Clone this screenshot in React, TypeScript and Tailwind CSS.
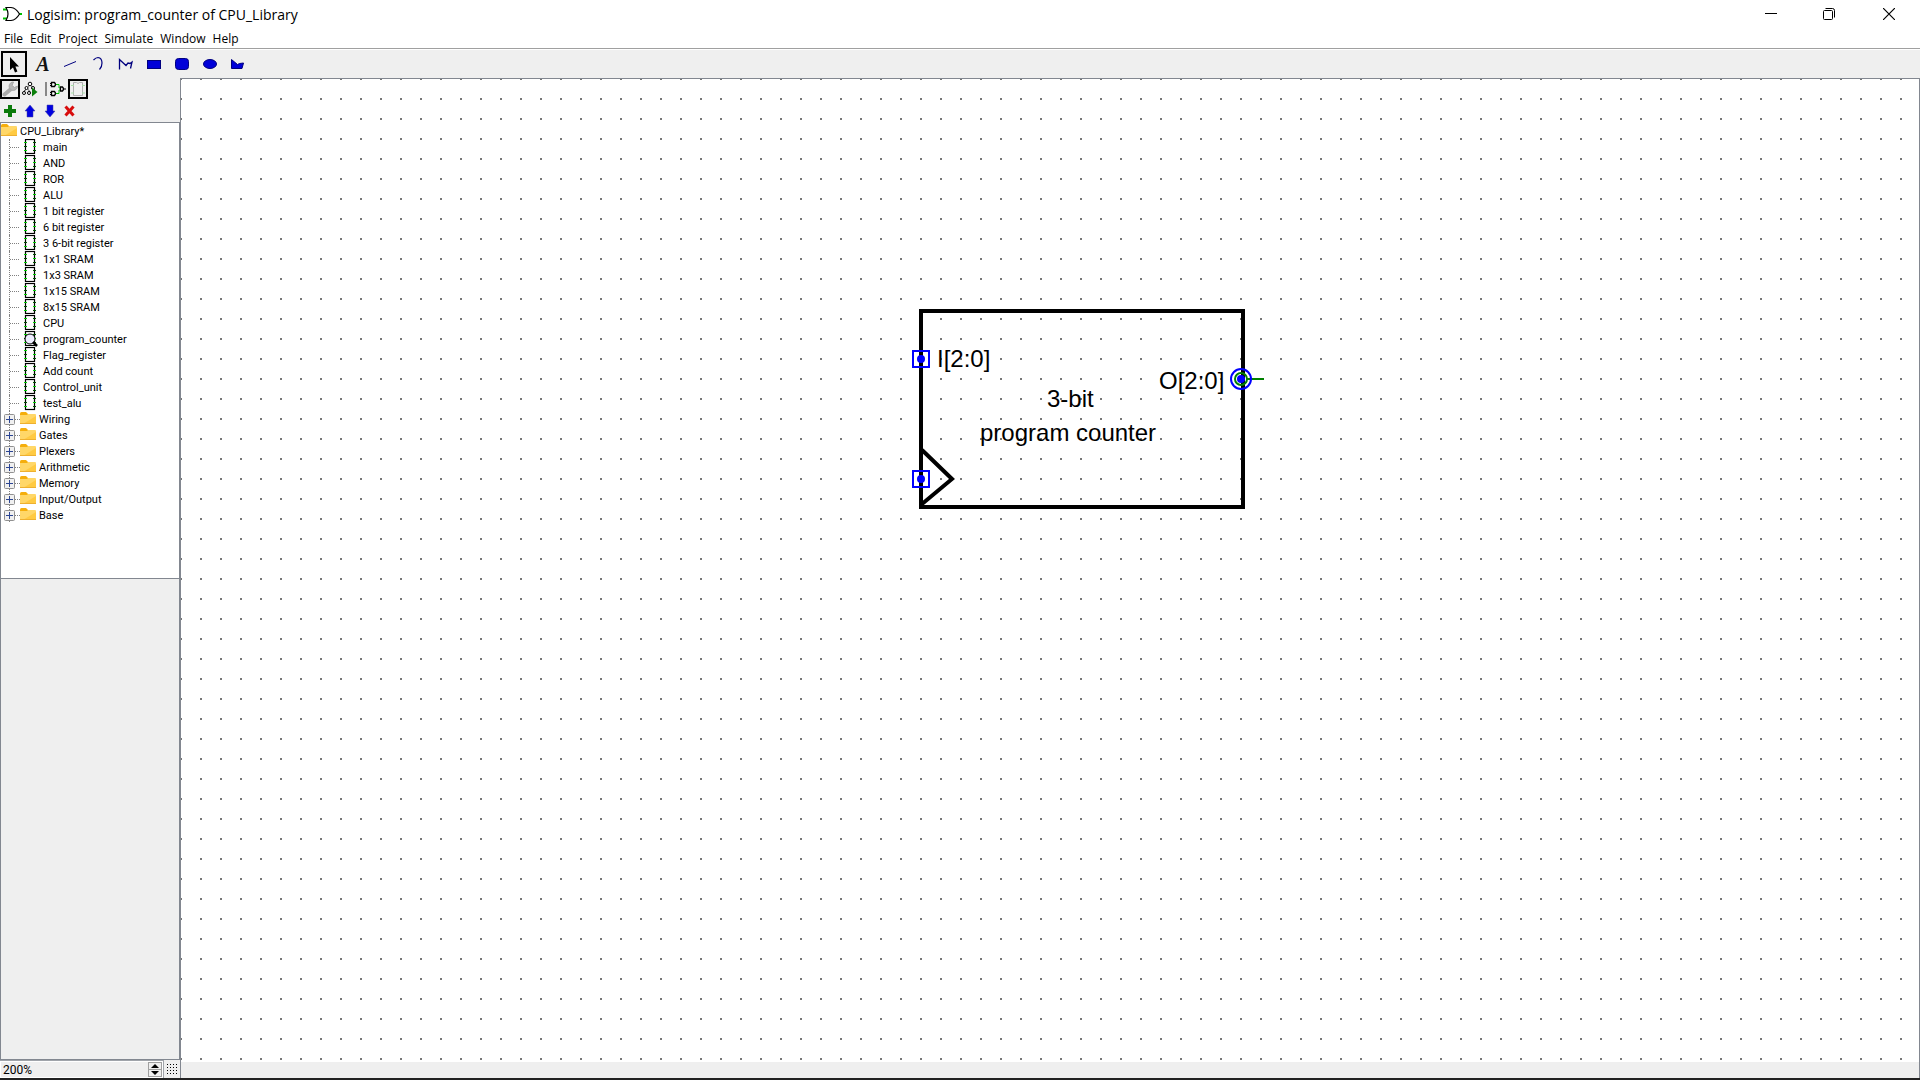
import type { ReactNode } from "react";

const menus = ["File", "Edit", "Project", "Simulate", "Window", "Help"];

const circuits = [
  "main", "AND", "ROR", "ALU", "1 bit register", "6 bit register", "3 6-bit register",
  "1x1 SRAM", "1x3 SRAM", "1x15 SRAM", "8x15 SRAM", "CPU", "program_counter",
  "Flag_register", "Add count", "Control_unit", "test_alu",
];

const libraries = ["Wiring", "Gates", "Plexers", "Arithmetic", "Memory", "Input/Output", "Base"];

const navy = "#00007f";
const blue = "#0000d8";

const drawTools: { name: string; icon: ReactNode }[] = [
  {
    name: "Select",
    icon: <path d="M7 4v13l3-2.500 2 5 2.400-1-2-5H16z" fill="#000" />,
  },
  {
    name: "Text",
    icon: (
      <text x="12" y="18" textAnchor="middle" fontFamily="Liberation Serif, serif" fontSize="20" fontWeight="700" fontStyle="italic" fill="#111">
        A
      </text>
    ),
  },
  { name: "Line", icon: <path d="M5 13.500 17 8.500" stroke={navy} fill="none" /> },
  { name: "Curve", icon: <path d="M6.500 7Q9 4.500 11 4.500q4 .5 4 5.500 0 4-2.500 6.500" stroke={navy} strokeWidth="1.200" fill="none" /> },
  { name: "Polyline", icon: <path d="M4.500 16.500v-10l6.500 6 2-2.500 2 .5 2-1.500-1.500 6.500" stroke={navy} strokeWidth="1.300" fill="none" /> },
  { name: "Rectangle", icon: <rect x="4.500" y="7.500" width="13" height="8" fill={blue} stroke={navy} /> },
  { name: "Rounded Rectangle", icon: <rect x="4.500" y="5.500" width="13" height="11" rx="3" fill={blue} stroke={navy} /> },
  { name: "Oval", icon: <ellipse cx="11" cy="11" rx="6.500" ry="4.500" fill={blue} stroke={navy} /> },
  { name: "Polygon", icon: <path d="M4.500 6.500 10.500 11.500l2-1 4-.5-1.500 5.500H4.500z" fill={blue} stroke={navy} /> },
];

function Svg({ size, children }: { size: 16 | 22; children: ReactNode }) {
  return (
    <svg className="block shrink-0" width={size} height={size} viewBox={`0 0 ${size} ${size}`} aria-hidden="true">
      {children}
    </svg>
  );
}

function LogoIcon() {
  return (
    <svg width="20" height="18" viewBox="0 0 20 18" fill="none" aria-hidden="true">
      <path d="M0 4.500h4M0 13.500h4M16 9h3" stroke="#00c000" strokeWidth="2" />
      <path d="M3 2.500h5q5 .5 8.500 6.500-3.500 6-8.500 6.500H3q4-6.500 0-13z" stroke="#000" strokeWidth="1.200" fill="#fff" />
    </svg>
  );
}

function ChipIcon({ current }: { current?: boolean }) {
  return (
    <Svg size={16}>
      <rect x="3.500" y="0.500" width="9" height="14" fill="#fff" stroke="#000" strokeWidth="1.200" />
      <path d="M2 3.500h3M2 11.500h3M11 7.500h3" stroke="#00d000" />
      <path d="M2 7.500h3M11 3.500h3M11 11.500h3" stroke="#005000" />
      {current && (
        <>
          <circle cx="8" cy="8" r="5" fill="#eeeeff" stroke="#000" />
          <path d="M11 11l4 4" stroke="#000" strokeWidth="2.500" />
        </>
      )}
    </Svg>
  );
}

function FolderIcon() {
  return (
    <Svg size={16}>
      <path d="M0 2.500Q0 1 1.500 1H6l2 2v3H0z" fill="#f5ae0c" />
      <path d="M0 4h7l1-1h7q1 0 1 1v9H0z" fill="#ffd768" />
      <path d="M16 5v8H3z" fill="#ffca42" />
      <path d="M0 12.500h16" stroke="#eeb030" />
    </Svg>
  );
}

function WrenchIcon() {
  return (
    <Svg size={16}>
      <path d="M2.500 13.500 9 8" stroke="#ababab" strokeWidth="4" strokeLinecap="round" />
      <path d="M11.500 1a4.200 4.200 0 1 0 4 4l-3 1.500-2.500-2z" fill="#b8b8b8" stroke="#a6a6a6" />
    </Svg>
  );
}

function SimulationIcon() {
  return (
    <Svg size={16}>
      <path d="M8 4 3 9M8 4l5 5M5 7l4 5M3 9l-1 4" stroke="#000" fill="none" strokeDasharray="2 1" />
      <g fill="#fff" stroke="#000">
        <circle cx="8" cy="3" r="1.800" />
        <circle cx="4.500" cy="7" r="1.500" />
        <circle cx="11" cy="7" r="1.500" />
        <circle cx="2" cy="12" r="1.500" />
        <circle cx="7" cy="12" r="1.500" />
      </g>
      <path d="M10 6.500v9l5.500-4.500z" fill="#0a800a" />
    </Svg>
  );
}

function LayoutIcon() {
  return (
    <Svg size={16}>
      <path d="M6 3.500h3v3.500h3M6 12.500h3V9h3" stroke="#00c000" fill="none" />
      <g fill="#fff" stroke="#000" strokeWidth="1.300">
        <path d="M1.500 1.500h3q2 2 0 4h-3zM1.500 10.500h3q2 2 0 4h-3z" />
        <path d="M10.500 6h2q2 2 0 4h-2z" />
      </g>
      <path d="M0 2.500h1M0 4.500h1M0 11.500h1M0 13.500h1M14 8h2" stroke="#000" />
    </Svg>
  );
}

function AppearanceIcon() {
  return (
    <Svg size={16}>
      <path d="M3.500 1.500h3q1.500 2 3 0h3v13h-9z" fill="#f0f0f0" stroke="#b0b0b0" />
      <path d="M1 4.500h3M1 12h3M12 4.500h3M12 12h3" stroke="#a8e0a8" />
    </Svg>
  );
}

function IconButton({ label, active, children }: { label: string; active?: boolean; children: ReactNode }) {
  return (
    <button
      type="button"
      aria-label={label}
      className={active ? "flex h-5 w-5 items-center justify-center border-2 border-black" : "flex h-5 w-5 items-center justify-center"}
    >
      {children}
    </button>
  );
}

function Explorer() {
  return (
    <nav aria-label="Project explorer" className="h-[457px] shrink-0 overflow-hidden border border-[#828790] bg-white font-['Roboto',sans-serif] text-[11px] leading-4">
      <button type="button" className="flex h-4 items-center gap-[3px] whitespace-nowrap">
        <FolderIcon />
        <span className="pt-px">CPU_Library*</span>
      </button>
      <ul>
        {circuits.map((name) => (
          <li key={name} className="ml-2 border-l border-dotted border-[#808080]">
            <button type="button" className="flex h-4 items-center whitespace-nowrap">
              <span className="mr-[3px] w-[9px] border-t border-dotted border-[#808080]" />
              <ChipIcon current={name === "program_counter"} />
              <span className="ml-[5px] pt-px">{name}</span>
            </button>
          </li>
        ))}
        {libraries.map((name) => (
          <li key={name}>
            <button type="button" aria-expanded="false" className="flex h-4 items-center whitespace-nowrap pl-[3px]">
              <svg width="16" height="16" viewBox="0 0 16 16" aria-hidden="true">
                <path d="M5.500 0v16M11 8.500h5" stroke="#808080" strokeDasharray="1 1" />
                <rect x="0.500" y="3.500" width="10" height="10" rx="1" fill="#f0f0f0" stroke="#919191" />
                <path d="M2 8.500h7M5.500 5v7" stroke="#2b4593" />
              </svg>
              <FolderIcon />
              <span className="ml-[3px] pt-px">{name}</span>
            </button>
          </li>
        ))}
      </ul>
    </nav>
  );
}

function Port({ x, y }: { x: number; y: number }) {
  return (
    <g>
      <rect x={x - 8} y={y - 8} width="16" height="16" fill="none" stroke="#0000ff" strokeWidth="2" />
      <circle cx={x} cy={y} r="4" fill="#0000ff" />
    </g>
  );
}

function AppearanceCanvas() {
  return (
    <svg className="block h-full w-full" role="img" aria-label="program_counter appearance">
      <defs>
        <pattern id="grid" x="-1" y="-1" width="20" height="20" patternUnits="userSpaceOnUse">
          <rect width="2" height="2" fill="#777777" />
        </pattern>
      </defs>
      <rect width="100%" height="100%" fill="url(#grid)" />
      <rect x="740" y="232" width="322" height="196" fill="none" stroke="#000" strokeWidth="4" />
      <path d="M741 371l30 29-30 25" fill="none" stroke="#000" strokeWidth="4" />
      <g fontFamily="Liberation Sans, Arial, sans-serif" fontSize="24" fill="#000">
        <text x="756" y="288">I[2:0]</text>
        <text x="866" y="328">3-bit</text>
        <text x="799" y="362">program counter</text>
        <text x="978" y="310">O[2:0]</text>
      </g>
      <Port x={740} y={280} />
      <Port x={740} y={400} />
      <path d="M1066 300h17" stroke="#008000" strokeWidth="2" />
      <circle cx="1060" cy="300" r="10" fill="none" stroke="#0000ff" strokeWidth="2" />
      <circle cx="1060" cy="300" r="6" fill="none" stroke="#008000" strokeWidth="2" />
      <circle cx="1060" cy="300" r="4" fill="#0000ff" />
    </svg>
  );
}

export default function App() {
  return (
    <div className="flex h-screen flex-col overflow-hidden border-b-2 border-[#222222] bg-[#efefef] font-['Noto_Sans',sans-serif] text-black">
      <header className="flex h-7 shrink-0 items-center justify-between bg-white">
        <div className="flex items-center gap-1 pl-[3px]">
          <LogoIcon />
          <h1 className="pt-0.5 font-['Open_Sans',sans-serif] text-[14px] leading-[26px]">Logisim: program_counter of CPU_Library</h1>
        </div>
        <div className="flex">
          <button type="button" aria-label="Minimize" className="flex h-7 w-[58px] items-center justify-center">
            <svg width="12" height="12" viewBox="0 0 12 12"><path d="M0 5.500h12" stroke="#000" /></svg>
          </button>
          <button type="button" aria-label="Restore" className="flex h-7 w-[58px] items-center justify-center">
            <svg width="12" height="12" viewBox="0 0 12 12" fill="none" stroke="#000">
              <rect x="0.500" y="2.500" width="9" height="9" rx="1" />
              <path d="M2.500.5h7q2 0 2 2v7" />
            </svg>
          </button>
          <button type="button" aria-label="Close" className="flex h-7 w-[62px] items-center justify-center">
            <svg width="12" height="12" viewBox="0 0 12 12"><path d="M0 0l12 12M12 0L0 12" stroke="#000" strokeWidth="1.200" /></svg>
          </button>
        </div>
      </header>

      <nav aria-label="Menu" className="flex h-[21px] shrink-0 items-center gap-[7px] border-b border-[#a0a0a0] bg-white pl-1 font-['Open_Sans',sans-serif] text-xs">
        {menus.map((menu) => (
          <button key={menu} type="button" className="h-5 pt-0.5">{menu}</button>
        ))}
      </nav>

      <div role="toolbar" aria-label="Drawing tools" className="flex h-[29px] shrink-0 items-center gap-0.5 border-t border-white pl-px">
        {drawTools.map((tool, i) => (
          <button
            key={tool.name}
            type="button"
            aria-label={tool.name}
            className={i === 0 ? "flex h-[26px] w-[26px] items-center justify-center border-2 border-black" : "flex h-[26px] w-[26px] items-center justify-center"}
          >
            <Svg size={22}>{tool.icon}</Svg>
          </button>
        ))}
      </div>

      <div className="flex min-h-0 flex-1">
        <aside className="flex w-[180px] shrink-0 flex-col">
          <div role="toolbar" aria-label="Views" className="flex h-[22px] shrink-0 items-center">
            <IconButton label="View toolbox" active><WrenchIcon /></IconButton>
            <IconButton label="View simulation tree"><SimulationIcon /></IconButton>
            <span className="ml-[5px] mr-px h-3.5 w-0.5 bg-[#888888]" />
            <IconButton label="Edit circuit layout"><LayoutIcon /></IconButton>
            <IconButton label="Edit circuit appearance" active><AppearanceIcon /></IconButton>
          </div>
          <div role="toolbar" aria-label="Circuits" className="flex h-[22px] shrink-0 items-center">
            <IconButton label="Add circuit">
              <Svg size={16}><path d="M6 2h4v4h4v4h-4v4H6v-4H2V6h4z" fill="#0a7a0a" /></Svg>
            </IconButton>
            <IconButton label="Move circuit up">
              <Svg size={16}><path d="M8 2l5 6h-2v6H5V8H3z" fill="#0000e0" stroke="#4040a0" strokeWidth=".5" /></Svg>
            </IconButton>
            <IconButton label="Move circuit down">
              <Svg size={16}><path d="M8 14l5-6h-2V2H5v6H3z" fill="#0000e0" stroke="#4040a0" strokeWidth=".5" /></Svg>
            </IconButton>
            <IconButton label="Remove circuit">
              <Svg size={16}><path d="M3.500 3.500l8 9M11.500 3.500l-8 9" stroke="#d80c0c" strokeWidth="3" /></Svg>
            </IconButton>
          </div>
          <Explorer />
          <section aria-label="Attributes" className="min-h-0 flex-1 border border-t-0 border-[#828790]" />
          <div className="flex h-[18px] shrink-0 items-stretch">
            <div className="flex min-w-0 flex-1 border-r border-t border-[#a0a4aa] bg-white p-px">
              <input aria-label="Zoom" defaultValue="200%" className="min-w-0 flex-1 bg-[#efefef] pl-0.5 font-['Roboto',sans-serif] text-[12px] leading-3 outline-none" />
              <div className="flex w-3.5 flex-col border border-[#a0a0a0] bg-[#efefef]">
                <button type="button" aria-label="Zoom in" className="flex flex-1 items-center justify-center border-b border-[#a0a0a0]">
                  <svg width="8" height="4" viewBox="0 0 8 4"><path d="M0 4l4-4 4 4z" /></svg>
                </button>
                <button type="button" aria-label="Zoom out" className="flex flex-1 items-center justify-center">
                  <svg width="8" height="4" viewBox="0 0 8 4"><path d="M0 0l4 4 4-4z" /></svg>
                </button>
              </div>
            </div>
            <button type="button" aria-label="Toggle grid" className="flex w-4 items-center justify-center">
              <svg width="11" height="11" viewBox="0 0 11 11">
                <path d="M0 .5h11M0 3.500h11M0 6.500h11M0 9.500h11" stroke="#000" strokeDasharray="1 2" />
              </svg>
            </button>
          </div>
        </aside>
        <main className="flex min-w-0 flex-1 flex-col border-x border-[#828790]">
          <div className="min-h-0 flex-1 border-t border-[#828790] bg-white">
            <AppearanceCanvas />
          </div>
          <div className="h-4 shrink-0" />
        </main>
      </div>
    </div>
  );
}
